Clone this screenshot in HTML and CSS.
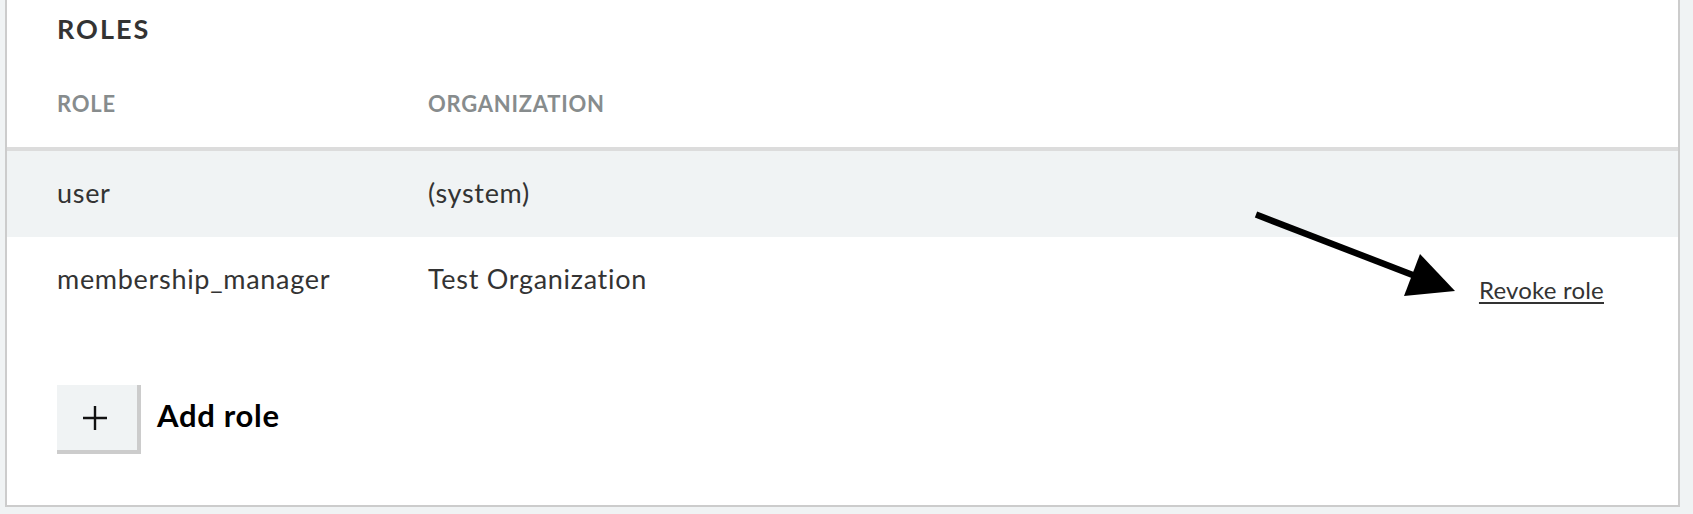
FILE: index.html
```html
<!DOCTYPE html>
<html lang="en">
<head>
    <meta charset="UTF-8">
    <meta name="viewport" content="width=device-width, initial-scale=1.0">
    <title>Roles</title>
    <link rel="stylesheet" href="styles.css">
</head>
<body>
    <div class="card">
        <h2 class="card-title">ROLES</h2>
        <table class="roles-table">
            <colgroup>
                <col class="col-role">
                <col class="col-org">
                <col>
            </colgroup>
            <thead>
                <tr>
                    <th>ROLE</th>
                    <th>ORGANIZATION</th>
                    <th></th>
                </tr>
            </thead>
            <tbody>
                <tr class="striped">
                    <td>user</td>
                    <td>(system)</td>
                    <td></td>
                </tr>
                <tr>
                    <td>membership_manager</td>
                    <td>Test Organization</td>
                    <td class="actions"><a href="#" class="revoke-link">Revoke role</a></td>
                </tr>
            </tbody>
        </table>

        <div class="add-role">
            <button class="add-button" type="button" aria-label="Add role">
                <svg width="24" height="24" viewBox="0 0 24 24">
                    <path d="M12 0 V24 M0 12 H24" stroke="#111" stroke-width="2.4" fill="none"/>
                </svg>
            </button>
            <span class="add-label">Add role</span>
        </div>

        <!-- annotation arrow pointing at the revoke link -->
        <svg class="arrow" width="220" height="100" viewBox="0 0 220 100">
            <line x1="6" y1="9.5" x2="164" y2="70.5" stroke="#000" stroke-width="6.5"/>
            <polygon points="170,49 154,91 205,86" fill="#000"/>
        </svg>
    </div>
</body>
</html>
```

FILE: styles.css
```css
html {
    background-color: #f0f3f4;
}

body {
    margin: 0;
    padding: 0 13px 0 5px;
    font-family: Lato, "Liberation Sans", Arial, sans-serif;
    color: #333;
}

.card {
    position: relative;
    background-color: #fff;
    border: 2px solid #ccc;
    border-top: none;
    padding-bottom: 51px;
}

.card-title {
    margin: 0;
    padding-left: 50px;
    font-size: 27px;
    line-height: 58px;
    font-weight: 700;
    color: #333;
    letter-spacing: 2px;
}

.roles-table {
    width: 100%;
    border-collapse: collapse;
    table-layout: fixed;
}

.col-role {
    width: 421px;
}

.col-org {
    width: 600px;
}

.roles-table th {
    text-align: left;
    font-size: 22px;
    line-height: 30px;
    font-weight: 700;
    color: #878c8d;
    padding: 31px 0 28px 0;
    border-bottom: 4px solid #dcdcdc;
    letter-spacing: 0.75px;
}

.roles-table td {
    font-size: 27px;
    line-height: 36px;
    padding: 24px 0 26px 0;
    vertical-align: top;
    color: #333;
    letter-spacing: 0.7px;
}

.roles-table th:first-child,
.roles-table td:first-child {
    padding-left: 50px;
}

.roles-table tr.striped td {
    background-color: #f0f3f4;
}

.roles-table td.actions {
    text-align: right;
    font-size: 24px;
    letter-spacing: 0.2px;
    padding: 35px 74px 15px 0;
}

.revoke-link {
    color: #333;
    text-decoration: underline;
    text-decoration-thickness: 2px;
    text-underline-offset: 3px;
}

.add-role {
    display: flex;
    align-items: flex-start;
    gap: 16px;
    margin-top: 62px;
    padding-left: 50px;
}

.add-button {
    width: 84px;
    height: 69px;
    padding: 0 4px 4px 0;
    background-color: #f0f3f4;
    border: none;
    border-right: 4px solid #ccc;
    border-bottom: 4px solid #ccc;
    display: flex;
    align-items: center;
    justify-content: center;
    cursor: pointer;
}

.add-button svg {
    margin-top: 4px;
}

.add-label {
    padding-top: 10px;
    font-size: 31px;
    line-height: 40px;
    font-weight: 700;
    color: #000;
    letter-spacing: 0.7px;
}

.arrow {
    position: absolute;
    left: 1243px;
    top: 205px;
    pointer-events: none;
}
```
